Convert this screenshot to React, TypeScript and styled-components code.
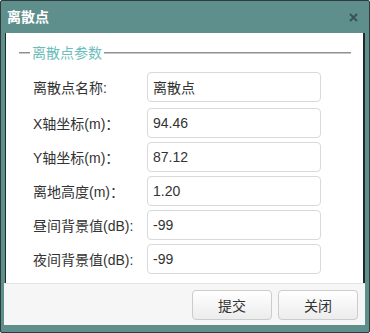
import React, { useState } from "react";
import styled, { createGlobalStyle } from "styled-components";

const GlobalStyle = createGlobalStyle`
  html, body {
    margin: 0;
    padding: 0;
    background: #ffffff;
  }
  body {
    font-family: "Liberation Sans", "Noto Sans CJK SC", sans-serif;
  }
`;

const Window = styled.div`
  box-sizing: border-box;
  width: 370px;
  height: 333px;
  display: flex;
  flex-direction: column;
  background-color: #5f8f8c;
  border: 1px solid #2f3b3a;
  border-radius: 2px;
`;

const TitleBar = styled.div`
  height: 32px;
  flex-shrink: 0;
  display: flex;
  align-items: center;
  justify-content: space-between;
  padding: 0 10px 0 6px;
`;

const Title = styled.span`
  color: #ffffff;
  font-size: 14px;
  font-weight: bold;
  line-height: 20px;
`;

const CloseButton = styled.button`
  width: 12px;
  height: 12px;
  padding: 0;
  border: none;
  background: transparent;
  cursor: pointer;
  display: flex;
  align-items: center;
  justify-content: center;
`;

const Body = styled.div`
  box-sizing: border-box;
  height: 250px;
  flex-shrink: 0;
  margin: 0 4px 0 4px;
  background-color: #ffffff;
  border-left: 1px solid #1f2a29;
  border-right: 2px solid #1f2a29;
  padding: 10px 12px 0 13px;
`;

const LegendRow = styled.div`
  display: flex;
  align-items: center;
  height: 20px;
  margin-bottom: 9px;
`;

const Rule = styled.div<{ $grow?: boolean }>`
  height: 1px;
  border-bottom: 1px solid #c8c8c8;
  background-color: #8f8f8f;
  width: ${({ $grow }) => ($grow ? "auto" : "11px")};
  flex: ${({ $grow }) => ($grow ? "1" : "none")};
`;

const Legend = styled.span`
  color: #6cbdbb;
  font-size: 14px;
  line-height: 20px;
  padding: 0 2px;
`;

const Row = styled.div<{ $first?: boolean }>`
  display: flex;
  align-items: center;
  height: 30px;
  padding-left: 14px;
  margin-bottom: ${({ $first }) => ($first ? "6px" : "4px")};
`;

const Label = styled.label`
  width: 114px;
  flex-shrink: 0;
  color: #333333;
  font-size: 14px;
  white-space: nowrap;
`;

const Input = styled.input`
  box-sizing: border-box;
  width: 174px;
  height: 30px;
  border: 1px solid #d9d9d9;
  border-radius: 4px;
  padding: 0 5px;
  font-family: "Liberation Sans", "Noto Sans CJK SC", sans-serif;
  font-size: 14px;
  color: #333333;
  outline: none;
  background: #ffffff;
`;

const Footer = styled.div`
  box-sizing: border-box;
  height: 42px;
  flex-shrink: 0;
  margin: 0 4px 7px 3px;
  background-color: #f6f6f6;
  border-top: 1px solid #e4e4e4;
  display: flex;
  justify-content: flex-end;
  align-items: flex-start;
  gap: 6px;
  padding: 6px 7px 0 0;
`;

const Button = styled.button`
  box-sizing: border-box;
  width: 80px;
  height: 30px;
  border: 1px solid #cccccc;
  border-radius: 4px;
  background: linear-gradient(#ffffff, #ececec);
  color: #333333;
  font-family: "Liberation Sans", "Noto Sans CJK SC", sans-serif;
  font-size: 14px;
  cursor: pointer;
`;

const fields = [
  { label: "离散点名称:", value: "离散点" },
  { label: "X轴坐标(m)：", value: "94.46" },
  { label: "Y轴坐标(m)：", value: "87.12" },
  { label: "离地高度(m)：", value: "1.20" },
  { label: "昼间背景值(dB):", value: "-99" },
  { label: "夜间背景值(dB):", value: "-99" },
];

const App: React.FC = () => {
  const [values, setValues] = useState(fields.map((f) => f.value));

  return (
    <>
      <GlobalStyle />
      <Window>
        <TitleBar>
          <Title>离散点</Title>
          <CloseButton>
            <svg width="9" height="9" viewBox="0 0 9 9">
              <path d="M1 1 L8 8 M8 1 L1 8" stroke="#3a5352" strokeWidth="2" />
            </svg>
          </CloseButton>
        </TitleBar>
        <Body>
          <LegendRow>
            <Rule />
            <Legend>离散点参数</Legend>
            <Rule $grow />
          </LegendRow>
          {fields.map((f, i) => (
            <Row key={f.label} $first={i === 0}>
              <Label>{f.label}</Label>
              <Input
                value={values[i]}
                onChange={(e) => {
                  const next = [...values];
                  next[i] = e.target.value;
                  setValues(next);
                }}
              />
            </Row>
          ))}
        </Body>
        <Footer>
          <Button>提交</Button>
          <Button>关闭</Button>
        </Footer>
      </Window>
    </>
  );
};

export default App;
